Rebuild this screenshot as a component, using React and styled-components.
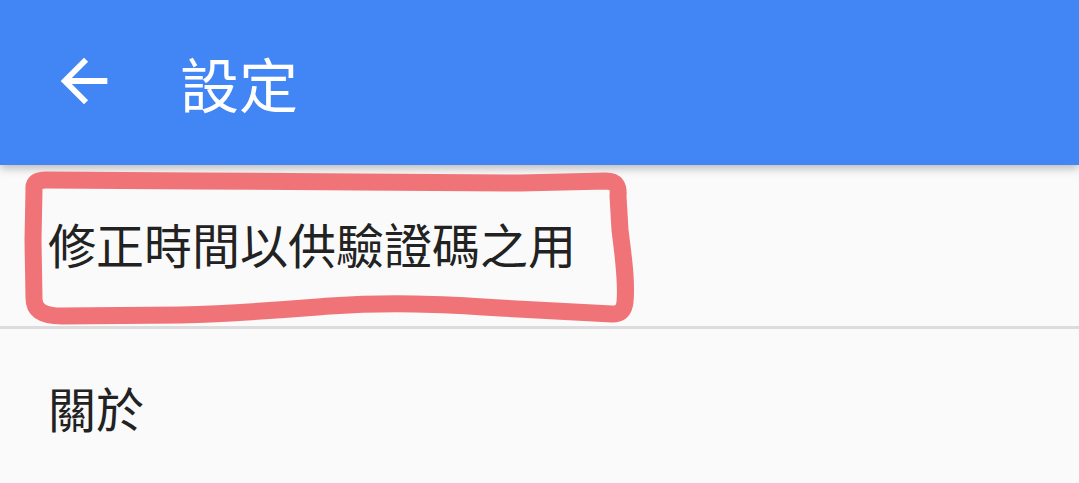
import styled, { createGlobalStyle } from 'styled-components';

const GlobalStyle = createGlobalStyle`
  html, body {
    margin: 0;
    padding: 0;
    background: #fafafa;
  }
  body {
    font-family: "Noto Sans CJK TC", "Noto Sans", Roboto, sans-serif;
    overflow: hidden;
  }
`;

const Screen = styled.div`
  position: relative;
  width: 1079px;
  height: 483px;
  background: #fafafa;
  overflow: hidden;
`;

const AppBar = styled.header`
  position: relative;
  z-index: 1;
  height: 165px;
  background-color: #4285f4;
  display: flex;
  align-items: center;
  padding-left: 49px;
  box-shadow: 0 3px 9px rgba(0, 0, 0, 0.28);
`;

const BackButton = styled.button`
  width: 70px;
  height: 70px;
  padding: 0;
  margin-top: -3px;
  border: none;
  background: none;
  color: #ffffff;
  display: flex;
  align-items: center;
  justify-content: center;
  cursor: pointer;

  svg {
    width: 70px;
    height: 70px;
  }
`;

const Title = styled.h1`
  margin: 0 0 0 61px;
  font-size: 59px;
  line-height: 1;
  font-weight: 400;
  color: #ffffff;
`;

const List = styled.ul`
  list-style: none;
  margin: 0;
  padding: 0;
`;

const Row = styled.li`
  box-sizing: border-box;
  height: ${props => (props.$divider ? '164px' : '161px')};
  display: flex;
  align-items: center;
  padding: 0 0 5px 48px;
  font-size: 48px;
  line-height: 1;
  font-weight: 400;
  color: #222222;
  border-bottom: ${props => (props.$divider ? '3px solid #dcdcdc' : 'none')};
`;

const Highlight = styled.svg`
  position: absolute;
  left: 0;
  top: 0;
  z-index: 2;
  pointer-events: none;
`;

const items = [
  { label: '修正時間以供驗證碼之用', divider: true },
  { label: '關於', divider: false },
];

function App() {
  return (
    <Screen>
      <GlobalStyle />
      <AppBar>
        <BackButton aria-label="返回">
          <svg viewBox="0 0 24 24" fill="currentColor">
            <path d="M20 11H7.83l5.59-5.59L12 4l-8 8 8 8 1.41-1.41L7.83 13H20v-2z" />
          </svg>
        </BackButton>
        <Title>設定</Title>
      </AppBar>

      <List>
        {items.map((item) => (
          <Row key={item.label} $divider={item.divider}>
            {item.label}
          </Row>
        ))}
      </List>

      {/* hand-drawn annotation around the first row */}
      <Highlight width="1079" height="483" viewBox="0 0 1079 483">
        <path
          d="M34 190 C33 182 38 180 46 180 L200 181 C300 181 420 183 520 183 L606 181 C616 181 619 186 618 196 L620 230 C623 255 627 280 625 302 C624 311 620 314 612 314 L500 308 C440 304 390 302 330 306 C290 309 250 313 180 315 L62 316 C42 316 34 310 34 298 L33 240 Z"
          fill="none"
          stroke="#f07378"
          strokeWidth="17"
          strokeLinejoin="round"
          strokeLinecap="round"
        />
      </Highlight>
    </Screen>
  );
}

export default App;
